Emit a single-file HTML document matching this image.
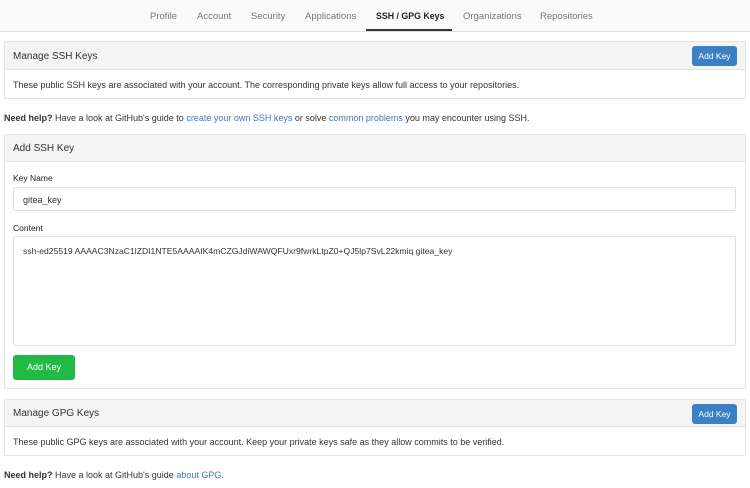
<!DOCTYPE html>
<html><head><style>
*{margin:0;padding:0;box-sizing:border-box}
body{width:750px;height:488px;background:#fff;font-family:"Liberation Sans",sans-serif;font-size:9px;color:#333;position:relative;overflow:hidden}
.a{position:absolute;white-space:nowrap}
.tabs{left:0;top:0;width:750px;height:32px;background:#fafafa;border-bottom:1px solid #ddd}
.tab{top:11px;color:#777;font-size:9.5px}
.panel{position:absolute;left:4px;width:742px;border:1px solid #e3e3e3;border-radius:2px;background:#fff}
.hd{position:absolute;left:0;top:0;right:0;background:#f4f4f4;border-bottom:1px solid #e3e3e3}
.btn{position:absolute;background:#3b7fc4;color:#fff;border-radius:3px;font-size:8.5px;text-align:center}
a{color:#4078c0;text-decoration:none}
.inp{position:absolute;left:8px;width:723px;border:1px solid #ddd;border-radius:3px;background:#fff}
</style></head><body>
<div class="a tabs"></div>
<div class="a tab" style="left:150px">Profile</div>
<div class="a tab" style="left:197px">Account</div>
<div class="a tab" style="left:251px">Security</div>
<div class="a tab" style="left:305px">Applications</div>
<div class="a tab" style="left:376px;color:#222;font-weight:bold;font-size:8.8px">SSH / GPG Keys</div>
<div class="a" style="left:366px;top:29px;width:86px;height:2px;background:#333"></div>
<div class="a tab" style="left:463px">Organizations</div>
<div class="a tab" style="left:540px">Repositories</div>

<div class="panel" style="top:41px;height:58px">
 <div class="hd" style="height:28px"><span class="a" style="left:8px;top:9px;font-size:10px">Manage SSH Keys</span></div>
 <div class="btn" style="left:687px;top:4px;width:45px;height:20px;line-height:20px">Add Key</div>
 <span class="a" style="left:8px;top:38px">These public SSH keys are associated with your account. The corresponding private keys allow full access to your repositories.</span>
</div>
<div class="a" style="left:4px;top:113px"><b>Need help?</b> Have a look at GitHub's guide to <a>create your own SSH keys</a> or solve <a>common problems</a> you may encounter using SSH.</div>

<div class="panel" style="top:134px;height:255px">
 <div class="hd" style="height:27px"><span class="a" style="left:8px;top:8px;font-size:10px">Add SSH Key</span></div>
 <span class="a" style="left:8px;top:38px;font-size:8.5px;color:#222">Key Name</span>
 <div class="inp" style="top:52px;height:24px"><span class="a" style="left:9px;top:7px">gitea_key</span></div>
 <span class="a" style="left:8px;top:88px;font-size:8.5px;color:#222">Content</span>
 <div class="inp" style="top:101px;height:110px"><span class="a" style="left:9px;top:9px;font-size:8.6px">ssh-ed25519 AAAAC3NzaC1lZDI1NTE5AAAAIK4mCZGJdiWAWQFUxr9fwrkLtpZ0+QJ5lp7SvL22kmiq gitea_key</span></div>
 <div class="btn" style="left:8px;top:220px;width:62px;height:25px;line-height:25px;background:#21ba45;font-size:9px">Add Key</div>
</div>

<div class="panel" style="top:399px;height:57px">
 <div class="hd" style="height:27px"><span class="a" style="left:8px;top:8px;font-size:10px">Manage GPG Keys</span></div>
 <div class="btn" style="left:687px;top:4px;width:45px;height:20px;line-height:20px">Add Key</div>
 <span class="a" style="left:8px;top:37px">These public GPG keys are associated with your account. Keep your private keys safe as they allow commits to be verified.</span>
</div>
<div class="a" style="left:4px;top:470px"><b>Need help?</b> Have a look at GitHub's guide <a>about GPG</a>.</div>
</body></html>
